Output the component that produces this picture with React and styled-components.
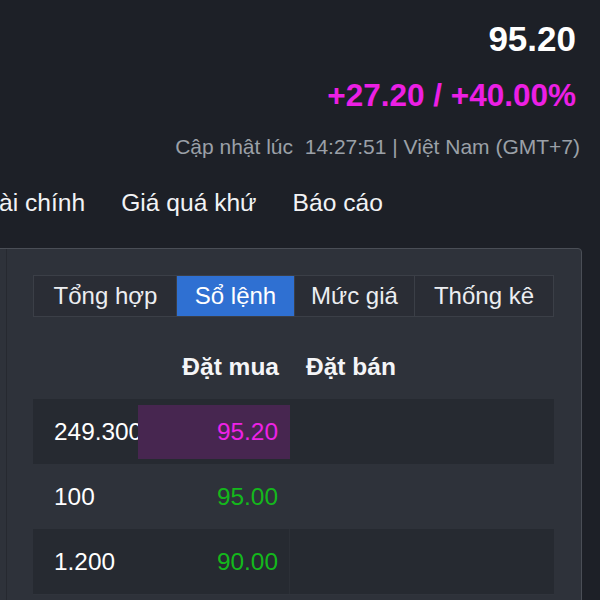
import React from "react";
import styled, { createGlobalStyle } from "styled-components";

const GlobalStyle = createGlobalStyle`
  body {
    margin: 0;
    background: #1d2027;
    font-family: "Liberation Sans", Arial, sans-serif;
    overflow: hidden;
  }
`;

const Page = styled.div`
  width: 600px;
  height: 600px;
  overflow: hidden;
`;

const Quote = styled.div`
  display: flex;
  flex-direction: column;
  align-items: flex-end;
  padding: 19px 24px 0 0;
`;

const Price = styled.div`
  font-size: 35px;
  font-weight: 700;
  color: #ffffff;
`;

const Change = styled.div`
  margin-top: 18px;
  font-size: 31.5px;
  font-weight: 700;
  color: #ec1fe4;
`;

const Updated = styled.div`
  margin-top: 21px;
  margin-right: -4px;
  font-size: 21px;
  color: #9ba0a8;
  white-space: pre;
`;

const Nav = styled.nav`
  display: flex;
  gap: 36px;
  margin: 30px 0 0 -16px;
  font-size: 24.6px;
  color: #f2f3f5;
  white-space: nowrap;
`;

const Panel = styled.section`
  display: flex;
  width: 610px;
  height: 400px;
  margin: 31px 0 0 -30px;
  background: #2e323a;
  border: 1px solid #4a4e56;
  border-radius: 4px;
`;

const Side = styled.div`
  width: 35px;
  flex: none;
  border-right: 1px solid #262930;
`;

const Content = styled.div`
  flex: 1;
  padding: 26px 27px 0 26px;
`;

const Tabs = styled.div`
  display: grid;
  grid-template-columns: 142px 118px 120px 1fr;
  height: 42px;
  background: #2a2d35;
  border: 1px solid #3b3f47;
  box-sizing: border-box;
`;

const Tab = styled.div`
  display: flex;
  align-items: center;
  justify-content: center;
  font-size: 24px;
  color: ${(p) => (p.$active ? "#ffffff" : "#eceef1")};
  background: ${(p) => (p.$active ? "#2f70d2" : "transparent")};
  border-left: 1px solid ${(p) => (p.$first ? "transparent" : "#3b3f47")};
`;

const Grid = styled.div`
  display: grid;
  grid-template-columns: 105px 152px 1fr;
`;

const HeadRow = styled(Grid)`
  height: 82px;
  padding-top: 18px;
  box-sizing: border-box;
  align-items: center;
  font-size: 24.5px;
  font-weight: 700;
  color: #f4f5f7;
`;

const HeadCell = styled.div`
  text-align: ${(p) => (p.$right ? "right" : "left")};
  padding: ${(p) => (p.$right ? "0 11px 0 0" : "0 0 0 16px")};
`;

const Row = styled(Grid)`
  height: 65px;
  align-items: center;
  font-size: 24.4px;
  background: ${(p) => (p.$shade ? "#262a31" : "transparent")};
  border-bottom: ${(p) => (p.$last ? "1px solid #30343c" : "none")};
`;

const Qty = styled.div`
  padding-left: 21px;
  color: #ffffff;
`;

const Bid = styled.div`
  align-self: stretch;
  display: flex;
  align-items: center;
  justify-content: flex-end;
  padding-right: 11px;
  margin: ${(p) => (p.$hit ? "6px 0 5px" : "0")};
  background: ${(p) => (p.$hit ? "#472650" : "transparent")};
  border-right: 1px solid ${(p) => (p.$divider ? "#2c3037" : "transparent")};
  color: ${(p) => p.$color};
`;

const rows = [
  { qty: "249.300", price: "95.20", color: "#ee22e6", hit: true },
  { qty: "100", price: "95.00", color: "#14b81c" },
  { qty: "1.200", price: "90.00", color: "#14b81c", divider: true },
];

const tabs = ["Tổng hợp", "Sổ lệnh", "Mức giá", "Thống kê"];

export default function App() {
  return (
    <Page>
      <GlobalStyle />
      <Quote>
        <Price>95.20</Price>
        <Change>+27.20 / +40.00%</Change>
        <Updated>Cập nhật lúc  14:27:51 | Việt Nam (GMT+7)</Updated>
      </Quote>
      <Nav>
        <span>Tài chính</span>
        <span>Giá quá khứ</span>
        <span>Báo cáo</span>
      </Nav>
      <Panel>
        <Side />
        <Content>
          <Tabs>
            {tabs.map((t, i) => (
              <Tab key={t} $active={i === 1} $first={i === 0}>
                {t}
              </Tab>
            ))}
          </Tabs>
          <HeadRow>
            <span />
            <HeadCell $right>Đặt mua</HeadCell>
            <HeadCell>Đặt bán</HeadCell>
          </HeadRow>
          {rows.map((r, i) => (
            <Row key={r.qty} $shade={i % 2 === 0} $last={i === rows.length - 1}>
              <Qty>{r.qty}</Qty>
              <Bid $hit={r.hit} $divider={r.divider} $color={r.color}>
                {r.price}
              </Bid>
              <div />
            </Row>
          ))}
        </Content>
      </Panel>
    </Page>
  );
}
